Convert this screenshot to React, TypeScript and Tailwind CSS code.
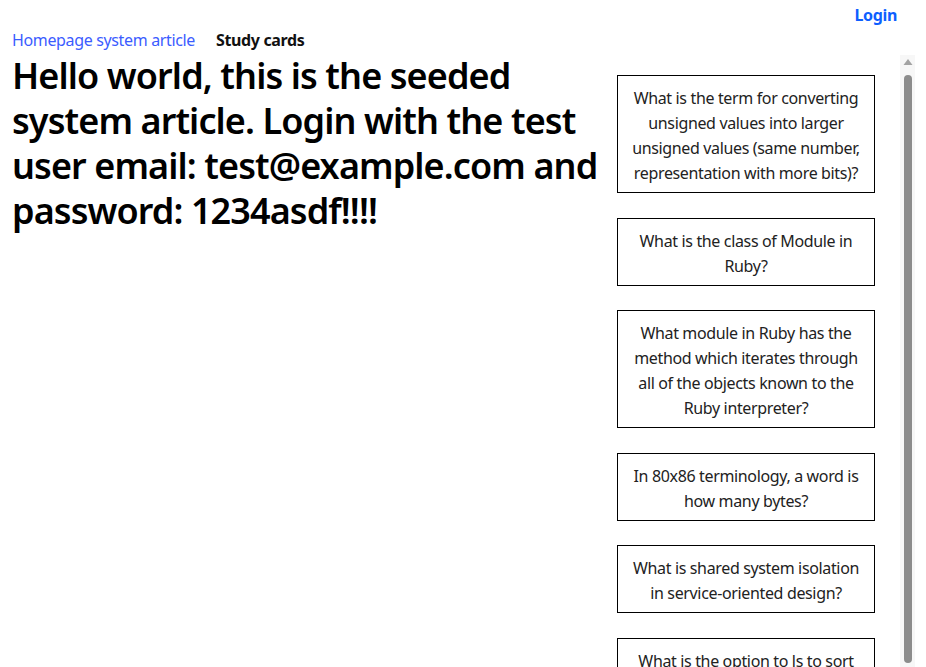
import React from "react";

const cards = [
  "What is the term for converting unsigned values into larger unsigned values (same number, representation with more bits)?",
  "What is the class of Module in Ruby?",
  "What module in Ruby has the method which iterates through all of the objects known to the Ruby interpreter?",
  "In 80x86 terminology, a word is how many bytes?",
  "What is shared system isolation in service-oriented design?",
  "What is the option to ls to sort files by modification time?",
];

export default function App() {
  return (
    <div className="h-[667px] overflow-hidden bg-white font-['Noto_Sans','Liberation_Sans',sans-serif] tracking-[-0.022em] text-black">
      <div className="flex h-[30px] items-center justify-end pr-[29px]">
        <a className="text-base font-bold text-[#0d5fff]">Login</a>
      </div>
      <div className="flex">
        <div className="w-[606px] pl-3">
          <nav className="flex h-[20px] items-center gap-[21px] text-base">
            <a className="text-[#3b5cff]">Homepage system article</a>
            <span className="font-bold text-[#111]">Study cards</span>
          </nav>
          <h1 className="pt-[3px] text-[36px] font-semibold leading-[45px] tracking-[-0.025em]">
            Hello world, this is the seeded system article. Login with the test user email: test@example.com and password: 1234asdf!!!!
          </h1>
        </div>
        <div className="mt-[25px] flex h-[612px]">
          <div className="flex w-[294px] flex-col gap-[24.6px] overflow-hidden pl-[11px] pt-[20px]">
            {cards.map((c) => (
              <div
                key={c}
                className="w-[258px] shrink-0 border border-black px-[10px] pb-[6px] pt-[10px] text-center text-base leading-[25px] text-[#222]"
              >
                {c}
              </div>
            ))}
          </div>
          <div className="flex w-[15px] flex-col items-center bg-[#f7f7f7]">
            <svg width="10" height="8" viewBox="0 0 10 8" className="mt-[3px]">
              <polygon points="5,1 9.5,7 0.5,7" fill="#a3a3a3" />
            </svg>
            <div className="mt-[9px] h-[588px] w-[8px] rounded-full bg-[#8c8c8c]" />
          </div>
        </div>
      </div>
    </div>
  );
}
